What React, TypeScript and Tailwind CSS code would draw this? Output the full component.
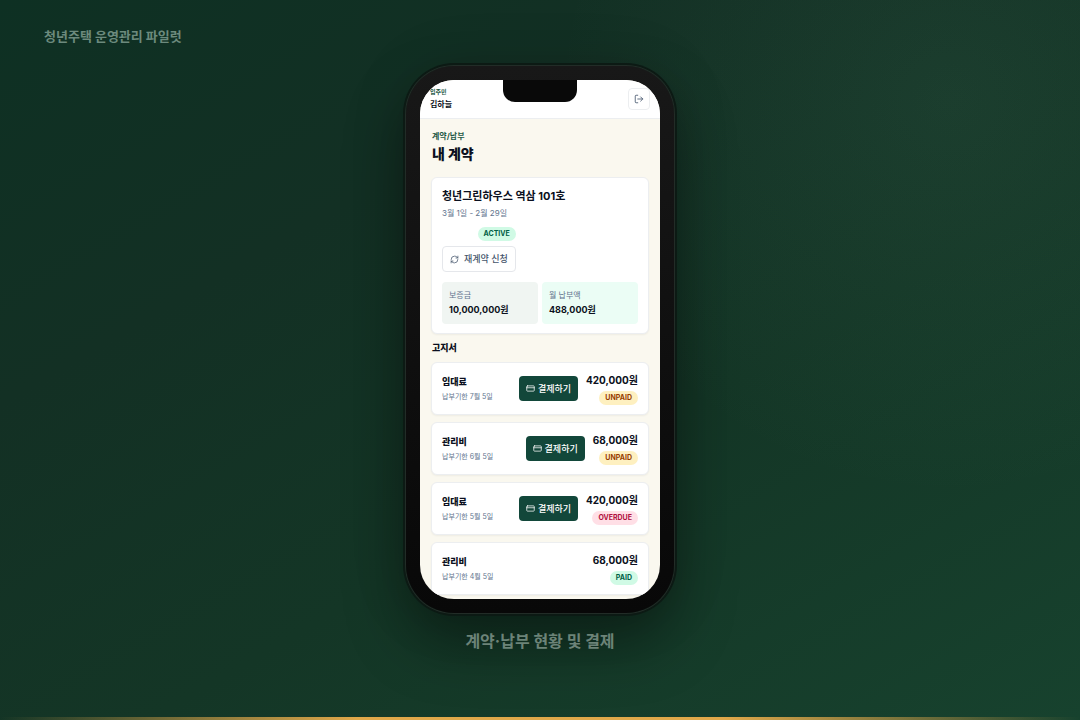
import { CreditCard, LogOut, RefreshCw } from 'lucide-react';

type BillStatus = 'UNPAID' | 'OVERDUE' | 'PAID';

interface Bill {
  id: number;
  name: string;
  due: string;
  amount: number;
  status: BillStatus;
}

const bills: Bill[] = [
  { id: 1, name: '임대료', due: '7월 5일', amount: 420000, status: 'UNPAID' },
  { id: 2, name: '관리비', due: '6월 5일', amount: 68000, status: 'UNPAID' },
  { id: 3, name: '임대료', due: '5월 5일', amount: 420000, status: 'OVERDUE' },
  { id: 4, name: '관리비', due: '4월 5일', amount: 68000, status: 'PAID' },
];

const badgeStyles: Record<string, string> = {
  ACTIVE: 'bg-[#d0fae5] text-[#006045]',
  PAID: 'bg-[#d0fae5] text-[#006045]',
  UNPAID: 'bg-[#fef0c0] text-[#973c00]',
  OVERDUE: 'bg-[#ffdfe6] text-[#b0103f]',
};

const won = (n: number) => `${n.toLocaleString('en-US')}원`;

function Badge({ status }: { status: string }) {
  return (
    <span className={`rounded-full px-[6px] text-[7px] leading-[14px] font-bold ${badgeStyles[status]}`}>
      {status}
    </span>
  );
}

function BillCard({ bill }: { bill: Bill }) {
  return (
    <li className="flex h-[53px] items-center rounded-md border border-[#eceef0] bg-white px-[10px] shadow-xs">
      <div className="flex-1">
        <h3 className="pt-px text-[9px] leading-[14px] font-extrabold text-[#0b1020]">{bill.name}</h3>
        <p className="mt-px text-[7px] leading-[14px] text-[#62748e]">납부기한 {bill.due}</p>
      </div>
      {bill.status !== 'PAID' && (
        <button
          type="button"
          className="mr-2 flex h-[25px] items-center gap-[3px] rounded-sm bg-[#12473a] px-[7px] text-[9px] font-medium text-white"
        >
          <CreditCard size={9} strokeWidth={2} />
          결제하기
        </button>
      )}
      <div className="flex flex-col items-end gap-1">
        <strong className="text-[10px] leading-[14px] font-bold text-[#0b1020]">{won(bill.amount)}</strong>
        <Badge status={bill.status} />
      </div>
    </li>
  );
}

function ContractCard() {
  return (
    <section className="rounded-md border border-[#eceef0] bg-white px-[10px] py-[9px] shadow-xs">
      <h2 className="mt-0.5 text-[11px] leading-[14px] font-bold text-[#0b1020]">청년그린하우스 역삼 101호</h2>
      <p className="mt-[3px] text-[8px] leading-[14px] text-[#62748e]">3월 1일 - 2월 29일</p>
      <div className="mt-[7px] flex w-fit flex-col items-end gap-[5px]">
        <Badge status="ACTIVE" />
        <button
          type="button"
          className="flex h-[26px] items-center gap-[5px] rounded-sm border border-[#e5e7eb] bg-white px-[7px] text-[9px] font-medium text-[#45556c]"
        >
          <RefreshCw size={9} strokeWidth={2} />
          재계약 신청
        </button>
      </div>
      <dl className="mt-[10px] grid grid-cols-2 gap-1">
        <div className="rounded-sm bg-[#f0f5f2] px-[7px] pt-[6px] pb-[7px]">
          <dt className="text-[8px] leading-[14px] text-[#62748e]">보증금</dt>
          <dd className="mt-px text-[9px] leading-[14px] font-bold text-[#0b1020]">{won(10000000)}</dd>
        </div>
        <div className="rounded-sm bg-[#ebfdf5] px-[7px] pt-[6px] pb-[7px]">
          <dt className="text-[8px] leading-[14px] text-[#62748e]">월 납부액</dt>
          <dd className="mt-px text-[9px] leading-[14px] font-bold text-[#0b1020]">{won(488000)}</dd>
        </div>
      </dl>
    </section>
  );
}

function Phone() {
  return (
    <div className="rounded-[48px] bg-linear-to-b from-[#181818] to-[#080808] p-[14px] shadow-[0_0_0_1px_#222c27,0_0_0_3px_#0c1a14,0_30px_60px_rgba(0,0,0,0.4),0_0_60px_rgba(0,0,0,0.12)]">
      <div className="relative aspect-[240/519] w-[240px] overflow-hidden rounded-[34px] bg-[#faf8ef]">
        <div className="absolute top-0 left-1/2 h-[22px] w-[74px] -translate-x-1/2 rounded-b-[12px] bg-[#090909]" />
        <header className="flex h-[39px] items-center justify-between border-b border-[#eceef0] bg-white px-[10px]">
          <div>
            <p className="text-[6px] leading-[10px] font-bold text-[#1c5745]">입주민</p>
            <p className="text-[8px] leading-[14px] font-bold text-[#0b1020]">김하늘</p>
          </div>
          <button
            type="button"
            aria-label="로그아웃"
            className="flex size-[22px] items-center justify-center rounded-sm border border-[#eceef0] bg-white text-[#45556c]"
          >
            <LogOut size={10} strokeWidth={2} />
          </button>
        </header>

        <main className="px-[11px] pt-[10px]">
          <div className="px-px">
            <p className="text-[8px] leading-[14px] font-bold text-[#1c5745]">계약/납부</p>
            <h1 className="text-[14px] leading-[22px] font-extrabold text-[#0b1020]">내 계약</h1>
          </div>
          <div className="mt-3">
            <ContractCard />
          </div>
          <h2 className="mt-[7px] px-px text-[9px] leading-[14px] font-extrabold text-[#0b1020]">고지서</h2>
          <ul className="mt-[7px] flex flex-col gap-[7px]">
            {bills.map((bill) => (
              <BillCard key={bill.id} bill={bill} />
            ))}
          </ul>
        </main>
      </div>
    </div>
  );
}

export default function App() {
  return (
    <div className="flex min-h-screen flex-col bg-[radial-gradient(circle_at_88%_14%,rgba(120,180,150,0.08),transparent_35%),linear-gradient(150deg,#0e3023_0%,#133024_30%,#143626_60%,#17422e_100%)] font-[Inter,'Noto_Sans_CJK_KR',sans-serif]">
      <p className="px-11 pt-[26px] text-[13px] leading-[20px] font-bold text-[#6c8a7d]">
        청년주택 운영관리 파일럿
      </p>
      <div className="mt-[20px] flex flex-1 flex-col items-center">
        <Phone />
        <p className="mt-4 text-[16px] leading-6 font-bold text-[#6c8378]">계약·납부 현황 및 결제</p>
      </div>
      <div className="h-[3px] bg-[linear-gradient(90deg,transparent,#e0a84a_33%,#e0a84a_67%,transparent)]" />
    </div>
  );
}
